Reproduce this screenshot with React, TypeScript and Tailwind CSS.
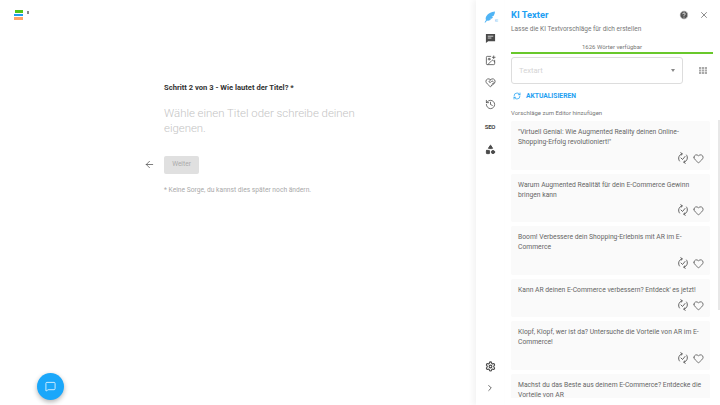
import React from 'react';
import { ArrowLeft, ChevronRight, CircleHelp, MessageSquare, RefreshCw, Settings, X, Heart, History, Shapes, ImagePlus, HeartHandshake } from 'lucide-react';

const suggestions = [
    { text: '"Virtuell Genial: Wie Augmented Reality deinen Online-Shopping-Erfolg revolutioniert!"', h: 'h-[49px]' },
    { text: 'Warum Augmented Realität für dein E-Commerce Gewinn bringen kann', h: 'h-[48px]' },
    { text: 'Boom! Verbessere dein Shopping-Erlebnis mit AR im E-Commerce', h: 'h-[49px]' },
    { text: "Kann AR deinen E-Commerce verbessern? Entdeck' es jetzt!", h: 'h-[38px]' },
    { text: 'Klopf, Klopf, wer ist da? Untersuche die Vorteile von AR im E-Commerce!', h: 'h-[49px]' },
];

const CycleCheck = () => (
    <svg width="12" height="12" viewBox="0 0 24 24" fill="none" stroke="#555" strokeWidth="1.8" strokeLinecap="round" strokeLinejoin="round">
        <path d="M5 18a9 9 0 0 1 5-14.5" />
        <path d="M7.5 1.5l3 2-2 3" />
        <path d="M19 6a9 9 0 0 1-5 14.5" />
        <path d="M16.5 22.5l-3-2 2-3" />
        <path d="M8 12l3 3 5-6" />
    </svg>
);

const Card = ({ text, h }: { text: string; h: string }) => (
    <div className={`${h} shrink-0 bg-[#fafafa] rounded-[2px] pl-[7px] pr-[6px] pt-[6px] relative`}>
        <p className="text-[6.75px] leading-[10px] text-[#666]">{text}</p>
        <div className="absolute right-[6px] bottom-[6px] flex items-center gap-[4px]">
            <CycleCheck />
            <Heart size={11} strokeWidth={1.6} className="text-[#444]" />
        </div>
    </div>
);

const Logo = () => (
    <div className="flex items-start gap-[4px]">
        <div className="flex flex-col gap-[1px] w-[9px]">
            <div className="h-[2.5px] bg-[#52c41a] mx-[0.5px]" />
            <div className="h-[2.5px] bg-[#1e9bf0]" />
            <div className="h-[2.5px] bg-[#ffa366]" />
        </div>
        <div className="w-[2px] h-[3px] bg-[#888] mt-[1px]" />
    </div>
);

export default function App() {
    return (
        <div className="w-[720px] h-[405px] overflow-hidden flex bg-white font-['Roboto',sans-serif]">
            <main className="w-[476px] shrink-0 relative flex flex-col">
                <div className="pl-[14px] pt-[10px]"><Logo /></div>
                <div className="pl-[164px] pt-[62px] pr-[118px]">
                    <h1 className="text-[7.6px] leading-[12px] font-bold text-[#333]">Schritt 2 von 3 - Wie lautet der Titel? *</h1>
                    <p className="mt-[12px] text-[11.4px] leading-[15px] font-light text-[#c4c4c4] w-[200px]">Wähle einen Titel oder schreibe deinen eigenen.</p>
                    <div className="mt-[20px] flex items-center relative">
                        <ArrowLeft size={11} strokeWidth={1.5} className="absolute left-[-20px] text-[#444]" />
                        <button className="w-[35px] h-[18px] bg-[#e0e0e0] rounded-[2px] text-[6.6px] text-[#aaa]">Weiter</button>
                    </div>
                    <p className="mt-[11px] text-[6.7px] leading-[10px] text-[#aaa]">* Keine Sorge, du kannst dies später noch ändern.</p>
                </div>
                <button className="absolute left-[37px] top-[373px] w-[27px] h-[27px] rounded-full bg-[#1aa7fa] shadow-[0_2px_5px_rgba(0,0,0,0.3)] flex items-center justify-center">
                    <MessageSquare size={11} strokeWidth={1.7} className="text-white" />
                </button>
            </main>
            <nav className="w-[28px] shrink-0 flex flex-col items-center justify-between pt-[11px] pb-[12px] shadow-[-3px_0_6px_rgba(0,0,0,0.05)] text-[#4a4a4a]">
                <div className="flex flex-col items-center">
                    <div className="h-[12px] flex items-start relative">
                        <svg width="12" height="12" viewBox="0 0 24 24" fill="#4fb4f5"><path d="M22 1C14 2 8 5 5 10c-2 3-2 6-1 8L1 23l2 0 3-4c3 1 6 0 8-2l-3-1 5-1 2-3-3-1 4-1c2-3 3-6 3-9z" /></svg>
                        <span className="absolute left-[11px] top-[9px] text-[3px] leading-[3px] text-[#4fb4f5]">KI</span>
                    </div>
                    <div className="mt-[10px] h-[11px]"><svg width="11" height="11" viewBox="0 0 24 24" fill="#4a4a4a"><path d="M2 2h20v16H7l-5 4z" /><path d="M6 7h12M6 11h8" stroke="#fff" strokeWidth="1.6" /></svg></div>
                    <ImagePlus size={11} strokeWidth={1.7} className="mt-[11px]" />
                    <HeartHandshake size={11} strokeWidth={1.7} className="mt-[11px]" />
                    <History size={11} strokeWidth={1.7} className="mt-[11px]" />
                    <span className="mt-[11px] text-[6px] leading-[11px] font-bold tracking-[-0.2px]">SEO</span>
                    <Shapes size={11} strokeWidth={2} className="mt-[12px]" fill="#4a4a4a" />
                </div>
                <div className="flex flex-col items-center">
                    <Settings size={11} strokeWidth={2.4} />
                    <ChevronRight size={10} strokeWidth={2} className="mt-[11px]" />
                </div>
            </nav>
            <aside className="flex-1 min-w-0 relative flex flex-col pl-[7px] pt-[9px]">
                <div className="flex items-center h-[12px] pr-[11px]">
                    <h2 className="text-[9.3px] font-bold text-[#1ea0f2] flex-1">KI Texter</h2>
                    <CircleHelp size={10} fill="#555" stroke="#fff" strokeWidth={2} className="mr-[10px]" />
                    <X size={10} strokeWidth={1.6} className="text-[#555]" />
                </div>
                <p className="mt-[4px] text-[6.5px] leading-[9px] text-[#777]">Lasse die KI Textvorschläge für dich erstellen</p>
                <p className="mt-[8px] text-[6px] leading-[9px] text-[#777] text-center pr-[7px]">1626 Wörter verfügbar</p>
                <div className="mt-[1px] h-[2px] bg-[#69c82b] mr-[7px]" />
                <div className="mt-[3px] flex items-center pr-[13px]">
                    <div className="w-[172px] h-[27px] border border-[#ddd] rounded-[3px] flex items-center pl-[7px] pr-[7px]">
                        <span className="flex-1 text-[7.6px] text-[#d4d4d4]">Textart</span>
                        <div className="w-0 h-0 border-x-[2.5px] border-x-transparent border-t-[3px] border-t-[#888]" />
                    </div>
                    <svg width="8" height="7" viewBox="0 0 8 7" fill="#aaa" className="ml-auto">
                        <rect x="0" y="0" width="2.2" height="2" /><rect x="2.9" y="0" width="2.2" height="2" /><rect x="5.8" y="0" width="2.2" height="2" />
                        <rect x="0" y="2.5" width="2.2" height="2" /><rect x="2.9" y="2.5" width="2.2" height="2" /><rect x="5.8" y="2.5" width="2.2" height="2" />
                        <rect x="0" y="5" width="2.2" height="2" /><rect x="2.9" y="5" width="2.2" height="2" /><rect x="5.8" y="5" width="2.2" height="2" />
                    </svg>
                </div>
                <div className="mt-[6px] flex items-center pl-[2px] text-[#1ea0f2]">
                    <RefreshCw size={8} strokeWidth={2.2} />
                    <span className="ml-[5px] text-[6.7px] leading-[12px] font-bold">AKTUALISIEREN</span>
                </div>
                <p className="mt-[6px] text-[6px] leading-[9px] text-[#777]">Vorschläge zum Editor hinzufügen</p>
                <div className="mt-[4px] w-[199px] h-[277px] overflow-hidden flex flex-col gap-[4px]">
                    {suggestions.map((s) => <Card key={s.text} text={s.text} h={s.h} />)}
                    <div className="h-[24px] shrink-0 bg-[#fafafa] rounded-t-[2px] pl-[7px] pr-[6px] pt-[6px] overflow-hidden">
                        <p className="text-[6.75px] leading-[10px] text-[#666]">Machst du das Beste aus deinem E-Commerce? Entdecke die Vorteile von AR</p>
                    </div>
                </div>
                <div className="absolute right-0 top-[120px] w-[2px] h-[190px] bg-[#e8e8e8]" />
            </aside>
        </div>
    );
}
